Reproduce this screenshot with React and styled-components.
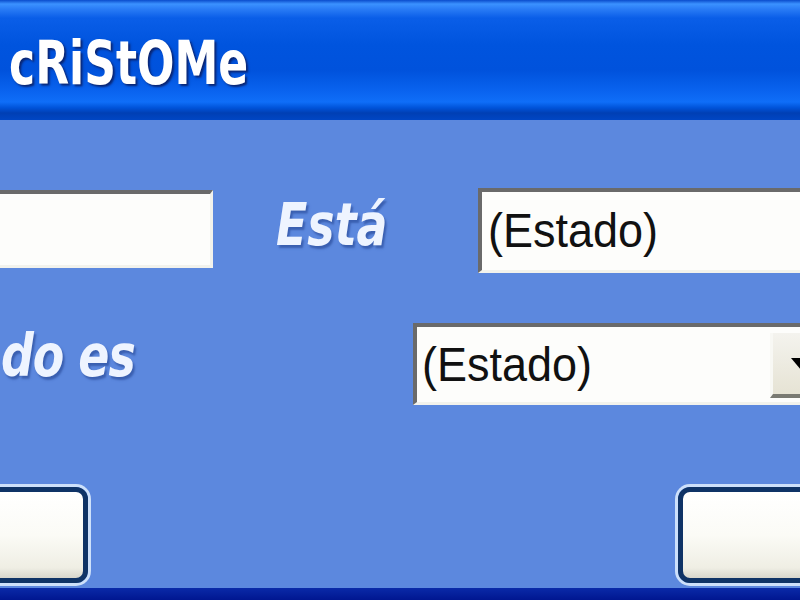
import React from "react"
import styled, { createGlobalStyle } from "styled-components"

const GlobalStyle = createGlobalStyle`
  html, body {
    margin: 0;
    padding: 0;
    background: #5c88de;
  }
`

const Window = styled.div`
  width: 800px;
  height: 600px;
  overflow: hidden;
  display: flex;
  flex-direction: column;
  font-family: "DejaVu Sans Condensed", "Liberation Sans", sans-serif;
`

const TitleBar = styled.header`
  height: 120px;
  flex-shrink: 0;
  display: flex;
  align-items: center;
  padding-left: 9px;
  box-sizing: border-box;
  background: linear-gradient(
    to bottom,
    #0a4ccc 0px,
    #3b92ff 4px,
    #2a7cf6 9px,
    #0a5ee8 18px,
    #0054de 45px,
    #0052dc 70px,
    #0a64f0 92px,
    #0f6ef8 102px,
    #0052d8 108px,
    #003fb4 113px,
    #0046c4 120px
  );
`

const Title = styled.h1`
  display: inline-block;
  margin: 6px 0 0;
  font-size: 49px;
  font-weight: bold;
  color: #ffffff;
  transform: scaleY(1.22);
  text-shadow: 2px 2px 2px #0a2470;
`

const Body = styled.main`
  flex: 1;
  display: flex;
  flex-direction: column;
  padding-top: 68px;
  background: #5c88de;
  overflow: hidden;
`

const Row = styled.div`
  display: flex;
  align-items: ${({ $align }) => $align || "flex-start"};
  height: ${({ $height }) => $height}px;
  margin-top: ${({ $top }) => $top || 0}px;
`

const Sunken = styled.div`
  flex-shrink: 0;
  box-sizing: border-box;
  background: #fdfdfb;
  border-top: 4px solid #6a6a6a;
  border-left: 4px solid #6a6a6a;
  border-right: 3px solid #f2f2ec;
  border-bottom: 3px solid #f2f2ec;
  display: flex;
  align-items: center;
  position: relative;
  margin-left: ${({ $left }) => $left || 0}px;
  margin-top: ${({ $top }) => $top || 0}px;
  width: ${({ $width }) => $width}px;
  height: ${({ $height }) => $height}px;
`

const FieldText = styled.span`
  display: inline-block;
  font-family: "Liberation Sans", Arial, sans-serif;
  font-size: 45px;
  color: #111;
  padding-left: ${({ $pad }) => $pad}px;
  transform: scaleY(1.08);
`

const Label = styled.label`
  flex-shrink: 0;
  font-size: 51px;
  font-weight: bold;
  font-style: italic;
  color: #eef4ff;
  text-shadow: 2px 2px 2px #3a5fb0;
  width: ${({ $width }) => $width}px;
  margin-left: ${({ $left }) => $left || 0}px;
  margin-top: ${({ $top }) => $top || 0}px;
  letter-spacing: ${({ $spacing }) => $spacing || 0}px;
  line-height: 1;
`

const LabelText = styled.span`
  display: inline-block;
  transform: scaleY(1.14);
`

const DropButton = styled.div`
  position: absolute;
  top: 6px;
  left: 353px;
  width: 70px;
  bottom: 4px;
  box-sizing: border-box;
  background: linear-gradient(to bottom, #f4f3ee, #e6e3d4);
  border-left: 3px solid #f8f8f4;
  border-bottom: 4px solid #7a7a72;
  display: flex;
  align-items: center;
  padding-left: 18px;
`

const Arrow = styled.span`
  width: 0;
  height: 0;
  border-left: 10px solid transparent;
  border-right: 10px solid transparent;
  border-top: 12px solid #000;
`

const ButtonRow = styled.div`
  display: flex;
  justify-content: space-between;
  margin-top: 82px;
`

const Button = styled.button`
  flex-shrink: 0;
  width: ${({ $width }) => $width}px;
  height: 96px;
  margin-left: ${({ $left }) => $left || 0}px;
  margin-right: ${({ $right }) => $right || 0}px;
  box-sizing: border-box;
  border: 5px solid #0f3366;
  border-radius: 12px;
  background: linear-gradient(to bottom, #ffffff 0%, #fbfbf6 50%, #efeee4 88%, #d8d6cc 100%);
  box-shadow: 0 0 0 3px #cde0fa;
  padding: 0;
`

const BottomEdge = styled.footer`
  height: 12px;
  flex-shrink: 0;
  background: linear-gradient(to bottom, #0a2aa8, #001690);
`

export default function App() {
  return (
    <>
      <GlobalStyle />
      <Window>
        <TitleBar>
          <Title>cRiStOMe</Title>
        </TitleBar>
        <Body>
          <Row $height={85}>
            <Sunken $left={-60} $top={2} $width={273} $height={78} />
            <Label $left={63} $top={12} $width={202}>
              <LabelText>Está</LabelText>
            </Label>
            <Sunken $width={360} $height={85}>
              <FieldText $pad={6}>(Estado)</FieldText>
            </Sunken>
          </Row>
          <Row $height={82} $top={50} $align="center">
            <Label $left={1} $top={-16} $width={412} $spacing={-1}>
              <LabelText>do es</LabelText>
            </Label>
            <Sunken $width={420} $height={82}>
              <FieldText $pad={5}>(Estado)</FieldText>
              <DropButton>
                <Arrow />
              </DropButton>
            </Sunken>
          </Row>
          <ButtonRow>
            <Button $width={150} $left={-62} aria-label="Aceptar" />
            <Button $width={150} $right={-28} aria-label="Cancelar" />
          </ButtonRow>
        </Body>
        <BottomEdge />
      </Window>
    </>
  )
}
